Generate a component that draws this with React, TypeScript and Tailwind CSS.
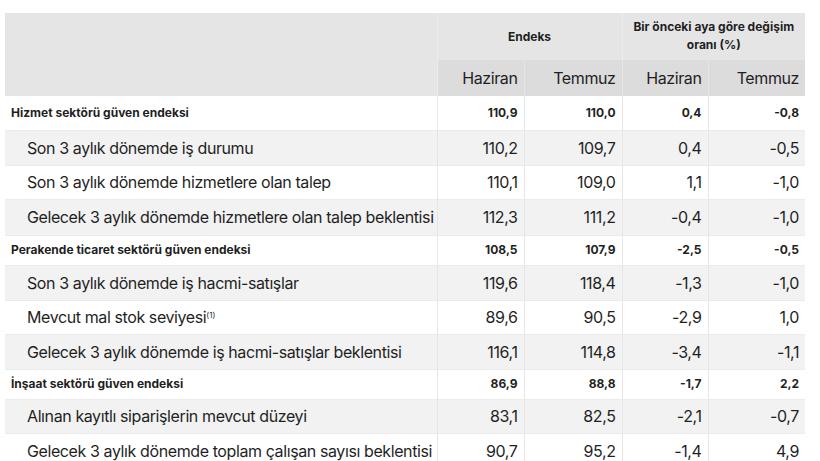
import React from "react";

type Row = { label: string; sup?: string; bold?: boolean; h: string; v: string[] };

const rows: Row[] = [
  { label: "Hizmet sektörü güven endeksi", bold: true, h: "h-[34px]", v: ["110,9", "110,0", "0,4", "-0,8"] },
  { label: "Son 3 aylık dönemde iş durumu", h: "h-[35px]", v: ["110,2", "109,7", "0,4", "-0,5"] },
  { label: "Son 3 aylık dönemde hizmetlere olan talep", h: "h-[34px]", v: ["110,1", "109,0", "1,1", "-1,0"] },
  { label: "Gelecek 3 aylık dönemde hizmetlere olan talep beklentisi", h: "h-[36px]", v: ["112,3", "111,2", "-0,4", "-1,0"] },
  { label: "Perakende ticaret sektörü güven endeksi", bold: true, h: "h-[30px]", v: ["108,5", "107,9", "-2,5", "-0,5"] },
  { label: "Son 3 aylık dönemde iş hacmi-satışlar", h: "h-[35px]", v: ["119,6", "118,4", "-1,3", "-1,0"] },
  { label: "Mevcut mal stok seviyesi", sup: "(1)", h: "h-[34px]", v: ["89,6", "90,5", "-2,9", "1,0"] },
  { label: "Gelecek 3 aylık dönemde iş hacmi-satışlar beklentisi", h: "h-[35px]", v: ["116,1", "114,8", "-3,4", "-1,1"] },
  { label: "İnşaat sektörü güven endeksi", bold: true, h: "h-[30px]", v: ["86,9", "88,8", "-1,7", "2,2"] },
  { label: "Alınan kayıtlı siparişlerin mevcut düzeyi", h: "h-[34px]", v: ["83,1", "82,5", "-2,1", "-0,7"] },
  { label: "Gelecek 3 aylık dönemde toplam çalışan sayısı beklentisi", h: "h-[35px]", v: ["90,7", "95,2", "-1,4", "4,9"] },
];

export default function App() {
  return (
    <div
      className="w-[820px] h-[461px] overflow-hidden bg-white pt-[13px] pl-[5px] text-[#1f1f1f]"
      style={{ fontFamily: "Inter, 'Liberation Sans', sans-serif" }}
    >
      <table className="border-collapse table-fixed w-[800px]">
        <colgroup>
          <col className="w-[432px]" />
          <col className="w-[87px]" />
          <col className="w-[98px]" />
          <col className="w-[86px]" />
          <col className="w-[97px]" />
        </colgroup>
        <thead>
          <tr className="h-[47px] bg-[#e5e5e5]">
            <th rowSpan={2} className="border-r border-[#ececec] bg-[#e5e5e5]"></th>
            <th colSpan={2} className="text-[12px] font-bold text-center border-r border-[#ececec] align-middle">
              Endeks
            </th>
            <th colSpan={2} className="text-[12px] font-bold text-center leading-[18px] align-middle px-1 pb-[2px]">
              Bir önceki aya göre değişim
              <br />
              oranı (%)
            </th>
          </tr>
          <tr className="h-[36px] bg-[#dcdcdc]">
            <th className="text-[16px] font-normal tracking-[-0.4px] text-right pr-[6px] border-r border-[#e6e6e6]">Haziran</th>
            <th className="text-[16px] font-normal tracking-[-0.4px] text-right pr-[6px] border-r border-[#e6e6e6]">Temmuz</th>
            <th className="text-[16px] font-normal tracking-[-0.4px] text-right pr-[6px] border-r border-[#e6e6e6]">Haziran</th>
            <th className="text-[16px] font-normal tracking-[-0.4px] text-right pr-[6px]">Temmuz</th>
          </tr>
        </thead>
        <tbody>
          {rows.map((r, i) => (
            <tr key={i} className={`${r.h} ${i % 2 === 1 ? "bg-[#f2f2f2]" : "bg-white"} border-b border-[#ebebeb]`}>
              <td
                className={
                  r.bold
                    ? "pl-[6px] text-[12px] font-bold whitespace-nowrap border-r border-[#e6e6e6]"
                    : "pl-[22px] text-[16px] tracking-[-0.4px] whitespace-nowrap border-r border-[#e6e6e6]"
                }
              >
                {r.label}
                {r.sup && (
                  <span className="text-[8px] tracking-normal align-[5px] leading-none">{r.sup}</span>
                )}
              </td>
              {r.v.map((x, j) => (
                <td
                  key={j}
                  className={`text-right pr-[6px] ${j < 3 ? "border-r border-[#e6e6e6]" : ""} ${
                    r.bold ? "text-[12px] font-bold" : "text-[16px] tracking-[-0.4px]"
                  }`}
                >
                  {x}
                </td>
              ))}
            </tr>
          ))}
        </tbody>
      </table>
    </div>
  );
}
